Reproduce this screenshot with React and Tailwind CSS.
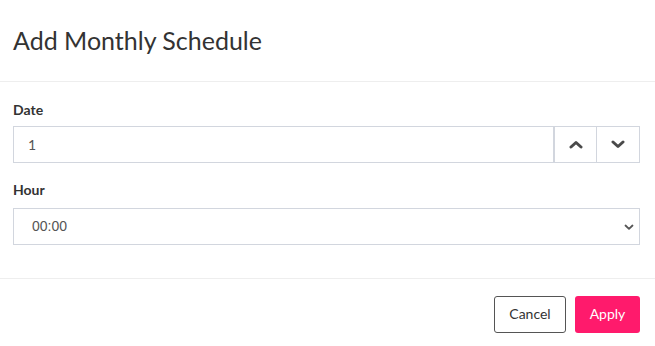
import React, { useState } from 'react';

const hours = Array.from({ length: 24 }, (_, i) => `${String(i).padStart(2, '0')}:00`);

function Chevron({ down }) {
    return (
        <svg className="w-[14px] h-[9px]" viewBox="0 0 14 9" fill="none">
            <path
                d={down ? 'M2 2 L7 6.5 L12 2' : 'M2 7 L7 2.5 L12 7'}
                stroke="currentColor"
                strokeWidth="3"
                strokeLinecap="round"
                strokeLinejoin="round"
            />
        </svg>
    );
}

function App() {
    const [date, setDate] = useState(1);
    const [hour, setHour] = useState('00:00');

    return (
        <div className="w-[655px] h-[346px] bg-white text-[#333] font-['Lato','Liberation_Sans',sans-serif]">
            {/* Header */}
            <div className="h-[82px] px-[13px] flex items-center border-b border-[#eeeeee]">
                <h4 className="text-[25px] font-normal text-[#333] leading-none">Add Monthly Schedule</h4>
            </div>

            {/* Body */}
            <div className="pl-[13px] pr-[15px] pt-[21px] pb-[33px]">
                <label className="block text-[14px] font-bold text-[#333] leading-none mb-[9px]">Date</label>
                <div className="flex h-[37px] border border-[#d2d6de]">
                    <input
                        type="text"
                        value={date}
                        onChange={(e) => setDate(e.target.value)}
                        className="flex-1 min-w-0 px-[14px] text-[14px] text-[#555] outline-none bg-white"
                    />
                    <button
                        onClick={() => setDate((d) => Math.min(31, Number(d) + 1))}
                        className="w-[43px] flex items-center justify-center border-l-2 border-[#d2d6de] text-[#4a4a4a]"
                    >
                        <Chevron />
                    </button>
                    <button
                        onClick={() => setDate((d) => Math.max(1, Number(d) - 1))}
                        className="w-[43px] flex items-center justify-center border-l border-[#d2d6de] text-[#4a4a4a]"
                    >
                        <Chevron down />
                    </button>
                </div>

                <label className="block text-[14px] font-bold text-[#333] leading-none mt-[20px] mb-[11px]">Hour</label>
                <div className="relative">
                    <select
                        value={hour}
                        onChange={(e) => setHour(e.target.value)}
                        className="w-full h-[37px] appearance-none border border-[#d2d6de] bg-white pl-[18px] text-[14px] text-[#555] font-['Liberation_Sans',sans-serif] outline-none"
                    >
                        {hours.map((h) => (
                            <option key={h} value={h}>{h}</option>
                        ))}
                    </select>
                    <svg className="absolute right-[6px] top-1/2 -translate-y-1/2 w-[10px] h-[10px] text-[#555] pointer-events-none" viewBox="0 0 10 10" fill="none">
                        <path d="M1.5 3.5 L5 6.8 L8.5 3.5" stroke="currentColor" strokeWidth="1.8" strokeLinecap="round" strokeLinejoin="round" />
                    </svg>
                </div>
            </div>

            {/* Footer */}
            <div className="border-t border-[#eeeeee] px-[15px] pt-[17px] flex justify-end gap-[9px]">
                <button className="h-[37px] w-[72px] rounded-[3px] border border-[#555] bg-white text-[14px] leading-none pb-[1px] text-[#333]">Cancel</button>
                <button className="h-[37px] w-[65px] rounded-[3px] bg-[#ff1a6c] text-[14px] leading-none pb-[1px] text-white">Apply</button>
            </div>
        </div>
    );
}

export default App;
